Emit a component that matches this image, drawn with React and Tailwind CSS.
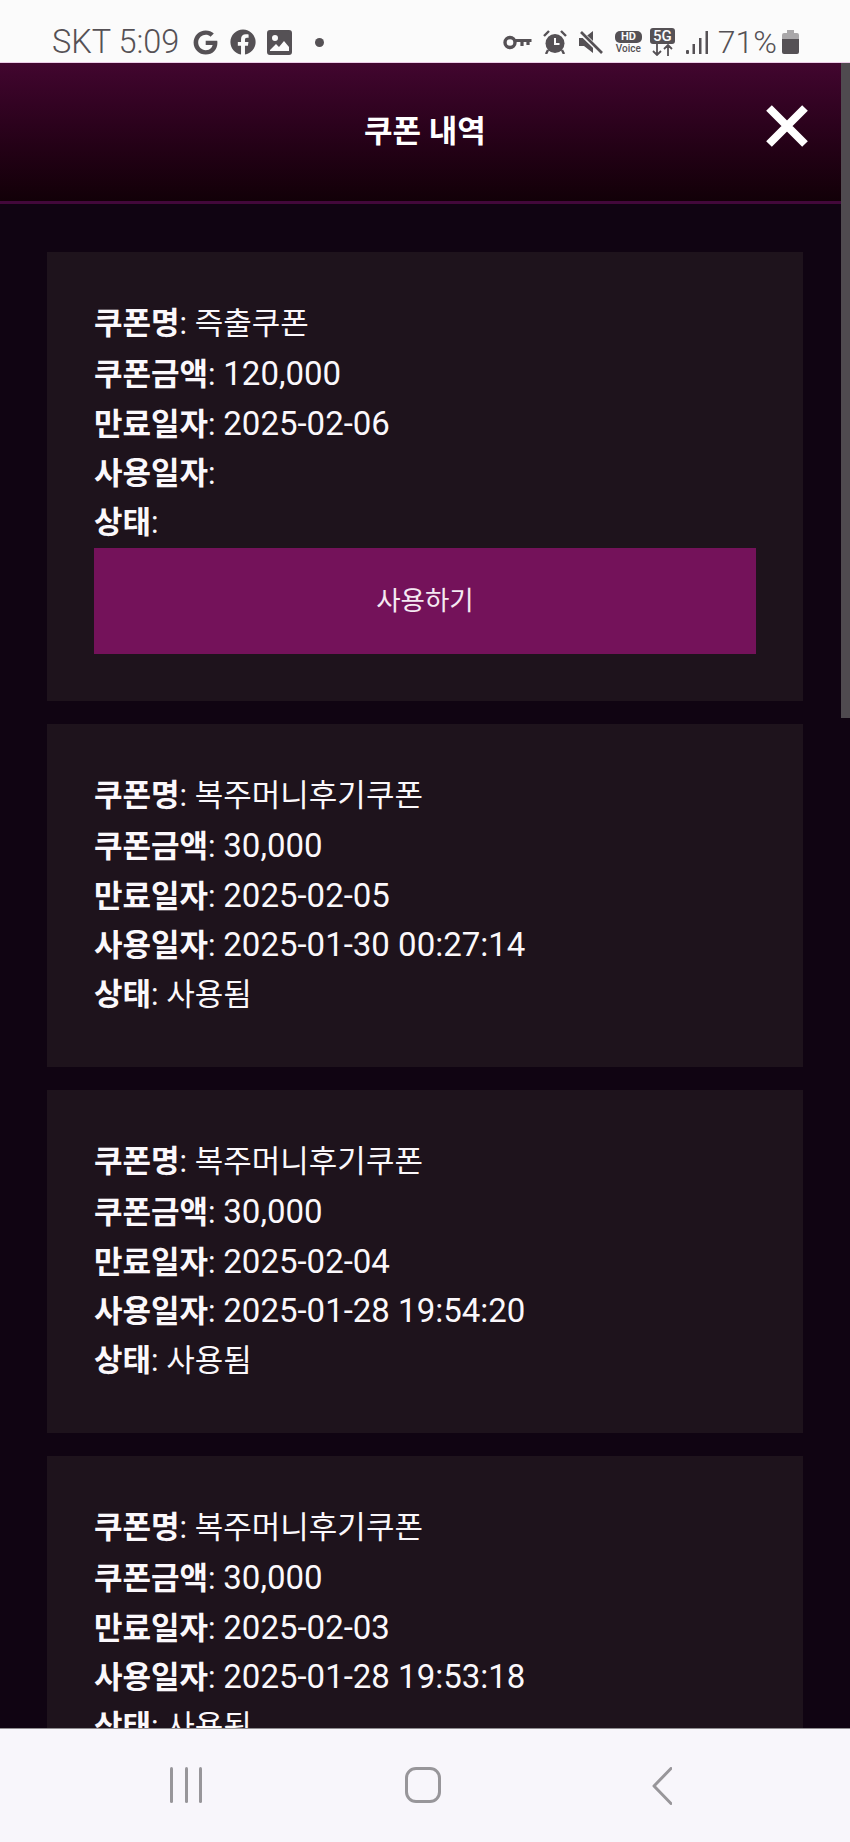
import { FaGoogle, FaFacebook } from 'react-icons/fa'

const font = { fontFamily: 'Roboto, "Noto Sans CJK KR", sans-serif' }

const coupons = [
  { name: '즉출쿠폰', amount: '120,000', expires: '2025-02-06', used: '', status: '', usable: true },
  { name: '복주머니후기쿠폰', amount: '30,000', expires: '2025-02-05', used: '2025-01-30 00:27:14', status: '사용됨' },
  { name: '복주머니후기쿠폰', amount: '30,000', expires: '2025-02-04', used: '2025-01-28 19:54:20', status: '사용됨' },
  { name: '복주머니후기쿠폰', amount: '30,000', expires: '2025-02-03', used: '2025-01-28 19:53:18', status: '사용됨' },
]

function Row({ label, value, numeric }) {
  return (
    <p className="h-[49.8px] text-[31px] leading-[49.8px] text-[#fbf8fb] whitespace-nowrap">
      <b className="font-bold">{label}</b>: {numeric ? <span className="text-[33px]">{value}</span> : value}
    </p>
  )
}

function Card({ coupon }) {
  return (
    <div className="bg-[#1e131c] p-[47px]">
      <Row label="쿠폰명" value={coupon.name} />
      <Row label="쿠폰금액" value={coupon.amount} numeric />
      <Row label="만료일자" value={coupon.expires} numeric />
      <Row label="사용일자" value={coupon.used} numeric />
      <Row label="상태" value={coupon.status} />
      {coupon.usable && (
        <button className="block h-[106px] w-full bg-[#74125a] text-[26.5px] text-[#f5e9f2]">사용하기</button>
      )}
    </div>
  )
}

function StatusBar() {
  return (
    <div className="flex h-[63px] shrink-0 items-center justify-between border-b border-[#eccde8] bg-[#fbfbfb] pt-[22px] pl-[52px] pr-[51px] text-[#555155]">
      <div className="flex items-center">
        <span className="w-[141px] text-[32.500px] leading-none font-light whitespace-nowrap">SKT 5:09</span>
        <FaGoogle className="h-[25px] w-[25px]" />
        <FaFacebook className="ml-[12px] h-[26px] w-[26px]" />
        <svg viewBox="0 0 25 25" className="ml-[11px] h-[25px] w-[25px]">
          <path fill="currentColor" fillRule="evenodd" d="M3 0h19a3 3 0 0 1 3 3v19a3 3 0 0 1-3 3H3a3 3 0 0 1-3-3V3a3 3 0 0 1 3-3zM3 21h19v-4l-5-6-5 6-3-3-6 6zM8 5a3 3 0 1 0 0 6 3 3 0 0 0 0-6z" />
        </svg>
        <span className="ml-[23px] h-[9px] w-[9px] rounded-full bg-[#555155]" />
      </div>
      <div className="flex items-center">
        <svg viewBox="0 0 29 15" className="h-[15px] w-[29px]" fill="none" stroke="currentColor">
          <circle cx="7" cy="7.5" r="5" strokeWidth="3.4" />
          <path d="M12 5.500h16.500M19 5v6M25 5v5" strokeWidth="3.2" />
        </svg>
        <svg viewBox="0 0 24 24" className="ml-[11px] h-[24px] w-[24px]">
          <circle cx="12" cy="13.500" r="9.500" fill="currentColor" />
          <path d="M12 8v6h4.500" fill="none" stroke="#fbfbfb" strokeWidth="2" />
          <path d="M1 6l5-5M23 6l-5-5M5 20l-2 4M19 20l2 4" stroke="currentColor" strokeWidth="2.4" />
        </svg>
        <svg viewBox="0 0 24 24" className="ml-[12px] h-[24px] w-[24px]">
          <path fill="currentColor" d="M0 8h5l9-7v22l-9-7H0z" />
          <path d="M0 1l24 23" stroke="#fbfbfb" strokeWidth="5" />
          <path d="M2 2l21 21" stroke="currentColor" strokeWidth="2.6" />
        </svg>
        <div className="ml-[12px] flex w-[27px] flex-col items-center">
          <span className="w-full rounded-[5px] bg-[#555155] text-center text-[11px] leading-[12px] font-bold text-[#fbfbfb]">HD</span>
          <span className="text-[10px] leading-[11px] font-medium">Voice</span>
        </div>
        <div className="ml-[8px] flex w-[25px] flex-col items-center">
          <span className="w-full rounded-[3px] bg-[#555155] text-center text-[15px] leading-[16px] font-medium text-[#fbfbfb]">5G</span>
          <svg viewBox="0 0 25 12" className="h-[12px] w-[25px]" fill="none" stroke="currentColor" strokeWidth="1.8">
            <path d="M7 0v11M3 7l4 4 4-4M18 12V1M14 5l4-4 4 4" />
          </svg>
        </div>
        <svg viewBox="0 0 22 23" className="ml-[11px] h-[23px] w-[22px]" fill="currentColor">
          <rect x="0" y="19" width="3" height="4" rx="1" />
          <rect x="6.500" y="13" width="2.500" height="10" />
          <rect x="13" y="7" width="2.500" height="16" />
          <rect x="19.500" y="0" width="2.500" height="23" />
        </svg>
        <span className="ml-[10px] text-[32px] leading-none font-light whitespace-nowrap">71%</span>
        <svg viewBox="0 0 17 24" className="ml-[5px] h-[24px] w-[17px]">
          <path fill="#a9a7a9" d="M5 0h7v3h3a2 2 0 0 1 2 2v4H0V5a2 2 0 0 1 2-2h3z" />
          <path fill="currentColor" d="M0 9h17v13a2 2 0 0 1-2 2H2a2 2 0 0 1-2-2z" />
        </svg>
      </div>
    </div>
  )
}

function BottomNav() {
  return (
    <div className="flex h-[114px] shrink-0 items-start border-t border-[#8f8d90] bg-[#f8f6fb] pt-[38px]">
      <div className="ml-[170px] flex h-[36px] w-[32px] justify-between">
        <span className="w-[3px] rounded-full bg-[#98969a]" />
        <span className="w-[3px] rounded-full bg-[#98969a]" />
        <span className="w-[3px] rounded-full bg-[#98969a]" />
      </div>
      <div className="ml-[203px] h-[36px] w-[36px] rounded-[11px] border-[3px] border-[#98969a]" />
      <svg viewBox="0 0 20 38" className="ml-[211px] h-[38px] w-[20px]" fill="none" stroke="#98969a" strokeWidth="3" strokeLinecap="round" strokeLinejoin="round">
        <path d="M19 1.500L2 19l17 17.500" />
      </svg>
    </div>
  )
}

export default function App() {
  return (
    <div className="flex h-[1842px] w-[850px] flex-col overflow-hidden bg-[#100412]" style={font}>
      <StatusBar />
      <div className="relative min-h-0 flex-1 overflow-hidden">
        <header className="relative flex h-[141px] items-center justify-center border-b-[3px] border-[#42083a] bg-gradient-to-b from-[#42062f] to-[#120008]">
          <h1 className="text-[31px] font-bold text-white">쿠폰 내역</h1>
          <svg viewBox="0 0 42 42" className="absolute top-[42px] right-[42px] h-[42px] w-[42px]" stroke="#fff" strokeWidth="8">
            <path d="M3 3l36 36M39 3L3 39" />
          </svg>
        </header>
        <div className="flex flex-col gap-[23px] px-[47px] pt-[48px]">
          {coupons.map((c, i) => (
            <Card key={i} coupon={c} />
          ))}
        </div>
        <div className="absolute top-0 right-0 h-[655px] w-[9px] bg-[#4f4a4f]" />
      </div>
      <BottomNav />
    </div>
  )
}
